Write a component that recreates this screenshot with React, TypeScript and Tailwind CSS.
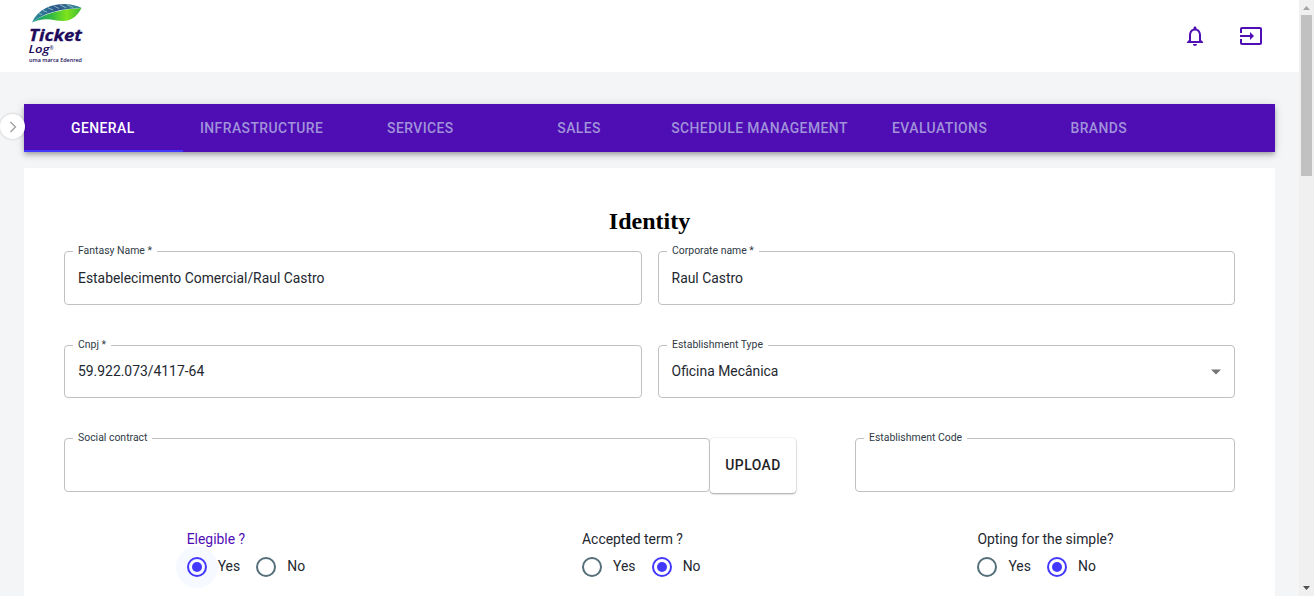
import React from "react";

const TABS = [
  { label: "GENERAL", width: "w-[158.75px]" },
  { label: "INFRASTRUCTURE", width: "w-[158.75px]" },
  { label: "SERVICES", width: "w-[158.75px]" },
  { label: "SALES", width: "w-[158.75px]" },
  { label: "SCHEDULE MANAGEMENT", width: "w-[201px]" },
  { label: "EVALUATIONS", width: "w-[159.3px]" },
  { label: "BRANDS", width: "w-[159px]" },
];

function Logo() {
  return (
    <svg width="60" height="66" viewBox="0 0 60 66" className="block">
      <defs>
        <linearGradient id="leaf" x1="0" y1="0" x2="1" y2="0">
          <stop offset="0" stopColor="#149a83" />
          <stop offset="0.4" stopColor="#35bb42" />
          <stop offset="0.7" stopColor="#7ee51a" />
          <stop offset="1" stopColor="#3fb936" />
        </linearGradient>
        <linearGradient id="vein" x1="0" y1="0" x2="1" y2="0">
          <stop offset="0" stopColor="#2b8f9c" />
          <stop offset="0.5" stopColor="#2c5588" />
          <stop offset="1" stopColor="#3c8f9a" />
        </linearGradient>
      </defs>
      <path d="M6 22.500C14 17 25 10 55.500 8C52 15 46 21 37 21C28 21 20 16 6 22.500Z" fill="url(#leaf)" />
      <path d="M6 22.500C12 9 25 4 39 4C47 4.500 52 6 55.500 8C34 8.500 18 13 6 22.500Z" fill="url(#vein)" />
      <path d="M13 13.500L16 14.500M17 10.500L21 12M22 7.800L27 10M28 5.800L33 8.500M34 4.800L40 7.800M41 4.600L47 7.500" stroke="#a9c6d6" strokeWidth="0.8" fill="none" />
      <text x="3" y="41" textLength="53" lengthAdjust="spacingAndGlyphs" fontFamily="Open Sans, sans-serif" fontSize="16.500" fontWeight="700" fontStyle="italic" fill="#200a5c" stroke="#200a5c" strokeWidth="0.300">Ticket</text>
      <text x="2.500" y="52.500" textLength="21" lengthAdjust="spacingAndGlyphs" fontFamily="Open Sans, sans-serif" fontSize="11" fontWeight="600" fontStyle="italic" fill="#200a5c">Log</text>
      <text x="23.500" y="49.500" fontFamily="Open Sans, sans-serif" fontSize="5" fill="#200a5c">®</text>
      <text x="3" y="61.500" textLength="53" lengthAdjust="spacingAndGlyphs" fontFamily="Open Sans, sans-serif" fontSize="5.500" fontWeight="600" fill="#200a5c">uma marca Edenred</text>
    </svg>
  );
}

function Field({ label, value, size, select }: { label: string; value?: string; size: string; select?: boolean }) {
  return (
    <div className={`relative flex items-center justify-between rounded-[4px] border border-[#c0c0c0] pr-3 ${size}`}>
      <span className="absolute -top-[9px] left-2 bg-white px-[5px] text-[10.44px] leading-4 text-[#2f3a45]">{label}</span>
      <span className="text-[13.9px] leading-5 text-[#23272f]">{value}</span>
      {select && (
        <svg width="12" height="6" viewBox="0 0 12 6" className="mt-0.5">
          <path d="M1 0.500H11L6 5.500Z" fill="#757575" />
        </svg>
      )}
    </div>
  );
}

function Radio({ checked, halo }: { checked?: boolean; halo?: boolean }) {
  return (
    <span className={`flex size-5 shrink-0 items-center justify-center rounded-full border-2 ${checked ? "border-[#4338ff]" : "border-[#546e7a]"} ${halo ? "bg-[#f6f9ff] shadow-[0_0_0_11px_#f6f9ff]" : ""}`}>
      {checked && <span className="size-2.5 rounded-full bg-[#4338ff]" />}
    </span>
  );
}

function Question({ title, yes, focused }: { title: string; yes?: boolean; focused?: boolean }) {
  return (
    <div className="w-[395.35px] shrink-0 text-[13.92px] text-[#23272f]">
      <p className={`relative z-10 leading-5 ${focused ? "text-[#4f0db4]" : ""}`}>{title}</p>
      <div className="mt-2 flex items-center leading-5">
        <Radio checked={yes} halo={focused} />
        <span className="relative -top-px ml-[11px] w-[38.6px]">Yes</span>
        <Radio checked={!yes} />
        <span className="relative -top-px ml-[11px]">No</span>
      </div>
    </div>
  );
}

export default function App() {
  return (
    <div className="flex h-[596px] w-[1314px] overflow-hidden bg-[#f4f5f7] font-['Roboto',sans-serif]">
      <div className="flex w-[1299px] flex-col">
        <header className="flex h-[72px] shrink-0 items-start justify-between bg-white pl-[26px] pr-9">
          <Logo />
          <div className="flex items-center gap-8 pt-6 text-[#4f0db4]">
            <svg width="24" height="24" viewBox="0 0 24 24" fill="currentColor">
              <path d="M12 22c1.100 0 2-.9 2-2h-4c0 1.100.9 2 2 2zm6-6v-5c0-3.070-1.630-5.640-4.500-6.320V4c0-.83-.67-1.500-1.500-1.500s-1.500.67-1.500 1.500v.68C7.640 5.360 6 7.920 6 11v5l-2 2v1h16v-1l-2-2zm-2 1H8v-6c0-2.480 1.510-4.500 4-4.500s4 2.020 4 4.500v6z" />
            </svg>
            <svg width="24" height="24" viewBox="0 0 24 24" fill="currentColor">
              <path d="M21 3.010H3c-1.100 0-2 .9-2 2V9h2V4.990h18v14.030H3V15H1v4.010c0 1.100.9 1.980 2 1.980h18c1.100 0 2-.88 2-1.980v-14c0-1.110-.9-2-2-2zM11 16l4-4-4-4v3H1v2h10v3z" />
            </svg>
          </div>
        </header>

        <div className="relative mt-8 px-6">
          <nav className="relative flex h-12 bg-[#4f0db4] shadow-[0_2px_4px_-1px_rgba(0,0,0,0.2),0_4px_5px_0_rgba(0,0,0,0.14),0_1px_10px_0_rgba(0,0,0,0.12)]">
            {TABS.map((tab, i) => (
              <div
                key={tab.label}
                className={`flex shrink-0 items-center justify-center whitespace-nowrap text-[13.92px] font-medium tracking-[0.44px] ${tab.width} ${i === 0 ? "border-b-2 border-[#4338ff] pt-0.5 text-white" : "text-[#a093da]"} ${i < 4 ? "pr-px" : ""}`}
              >
                {tab.label}
              </div>
            ))}
          </nav>
          <button className="absolute left-0 top-2.5 flex size-[25px] items-center justify-center rounded-full bg-white shadow-[0_0_2px_1px_rgba(0,0,0,0.1)]">
            <svg width="8" height="12" viewBox="0 0 8 12" fill="none" stroke="#999" strokeWidth="1.200">
              <path d="M1.500 1L6.500 6L1.500 11" />
            </svg>
          </button>
        </div>

        <main className="mx-6 mt-4 flex grow flex-col bg-white px-10 pt-[39px]">
          <h2 className="text-center font-['Liberation_Serif',serif] text-2xl font-bold leading-7 text-black">Identity</h2>
          <div className="mt-4 flex gap-4">
            <Field label="Fantasy Name *" value="Estabelecimento Comercial/Raul Castro" size="w-[578px] h-[54px] pl-[13px]" />
            <Field label="Corporate name *" value="Raul Castro" size="w-[577px] h-[54px] pl-[12.6px]" />
          </div>
          <div className="mt-10 flex gap-4">
            <Field label="Cnpj *" value="59.922.073/4117-64" size="w-[578px] h-[53px] pl-[13px] pb-0.5" />
            <Field label="Establishment Type" value="Oficina Mecânica" size="w-[577px] h-[53px] pl-[12.6px] pb-0.5" select />
          </div>
          <div className="mt-10 flex">
            <Field label="Social contract" size="w-[646px] h-[54px] pl-[13px]" />
            <button className="mr-[59px] flex h-[55px] w-[86px] items-center justify-center rounded-[4px] bg-white pb-px text-[13.92px] font-medium leading-5 tracking-[0.44px] text-[#1f1f27] shadow-[0_1px_2px_rgba(0,0,0,0.35),0_0_2px_rgba(0,0,0,0.12)]">UPLOAD</button>
            <Field label="Establishment Code" size="w-[380px] h-[54px] pl-[13px]" />
          </div>
          <div className="mt-9 flex pl-[122.7px]">
            <Question title="Elegible ?" yes focused />
            <Question title="Accepted term ?" />
            <Question title="Opting for the simple?" />
          </div>
        </main>
      </div>

      <aside className="flex w-[15px] flex-col items-center justify-between bg-[#f0f0f0]">
        <div className="flex flex-col items-center">
          <svg width="15" height="15" viewBox="0 0 15 15">
            <path d="M4 10H11L7.500 6Z" fill="#a3a3a3" />
          </svg>
          <div className="h-[161px] w-[11px] bg-[#c1c1c1]" />
        </div>
        <svg width="15" height="15" viewBox="0 0 15 15">
          <path d="M4 5H11L7.500 9Z" fill="#505050" />
        </svg>
      </aside>
    </div>
  );
}
